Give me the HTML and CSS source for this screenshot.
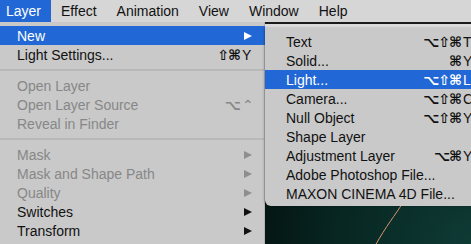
FILE: index.html
```html
<!DOCTYPE html>
<html lang="en">
<head>
  <meta charset="UTF-8">
  <title>Layer Menu</title>
  <link rel="stylesheet" href="styles.css">
</head>
<body>

  <div class="menubar">
    <div class="title open">Layer</div>
    <div class="title">Effect</div>
    <div class="title">Animation</div>
    <div class="title">View</div>
    <div class="title">Window</div>
    <div class="title">Help</div>
  </div>

  <div class="workspace">
    <div class="strip"></div>
    <div class="canvas">
      <svg class="curve" width="471" height="216" viewBox="0 0 471 216">
        <path d="M402 176 C396 186 386 198 375 218" fill="none" stroke="#d9946a" stroke-width="1"/>
      </svg>
    </div>
  </div>

  <!-- Layer menu -->
  <div class="menu main-menu">
    <div class="item active"><span class="label">New</span><span class="arrow"></span></div>
    <div class="item"><span class="label">Light Settings...</span><span class="keys"><span class="mods">⇧⌘</span><span class="key">Y</span></span></div>
    <div class="sep"></div>
    <div class="item disabled"><span class="label">Open Layer</span></div>
    <div class="item disabled"><span class="label">Open Layer Source</span><span class="keys"><span class="mods">⌥</span><span class="key">⌃</span></span></div>
    <div class="item disabled"><span class="label">Reveal in Finder</span></div>
    <div class="sep"></div>
    <div class="item disabled"><span class="label">Mask</span><span class="arrow"></span></div>
    <div class="item disabled"><span class="label">Mask and Shape Path</span><span class="arrow"></span></div>
    <div class="item disabled"><span class="label">Quality</span><span class="arrow"></span></div>
    <div class="item"><span class="label">Switches</span><span class="arrow"></span></div>
    <div class="item"><span class="label">Transform</span><span class="arrow"></span></div>
    <div class="item"><span class="label">Time</span><span class="arrow"></span></div>
  </div>

  <!-- New submenu -->
  <div class="menu sub-menu">
    <div class="item"><span class="label">Text</span><span class="keys"><span class="mods">⌥⇧⌘</span><span class="key">T</span></span></div>
    <div class="item"><span class="label">Solid...</span><span class="keys"><span class="mods">⌘</span><span class="key">Y</span></span></div>
    <div class="item active"><span class="label">Light...</span><span class="keys"><span class="mods">⌥⇧⌘</span><span class="key">L</span></span></div>
    <div class="item"><span class="label">Camera...</span><span class="keys"><span class="mods">⌥⇧⌘</span><span class="key">C</span></span></div>
    <div class="item"><span class="label">Null Object</span><span class="keys"><span class="mods">⌥⇧⌘</span><span class="key">Y</span></span></div>
    <div class="item"><span class="label">Shape Layer</span></div>
    <div class="item"><span class="label">Adjustment Layer</span><span class="keys"><span class="mods">⌥⌘</span><span class="key">Y</span></span></div>
    <div class="item"><span class="label">Adobe Photoshop File...</span></div>
    <div class="item"><span class="label">MAXON CINEMA 4D File...</span></div>
  </div>

</body>
</html>
```

FILE: styles.css
```css
body {
  font-family: 'Liberation Sans', 'DejaVu Sans', sans-serif;
  font-size: 14px;
  color: #111;
  margin: 0;
  width: 471px;
  height: 244px;
  overflow: hidden;
  position: relative;
  background-color: #000;
}

.menubar {
  display: flex;
  height: 22px;
  background-color: #d6d6d6;
}

.title {
  padding: 0 10px;
  line-height: 22px;
}

.title:first-child {
  padding-left: 6px;
}

.title.open {
  background-color: #2168d6;
  color: white;
}

.workspace {
  height: 222px;
  display: flex;
  flex-direction: column;
}

.strip {
  height: 4px;
  border-top: 2px solid #1a1a1a;
  background-color: #dadada;
}

.canvas {
  flex: 1;
  background: radial-gradient(circle at 100% 100%, #0f3b35 0%, #072420 28%, #000 60%);
}

.curve {
  display: block;
}

.menu {
  position: absolute;
  background-color: #c9c9c9;
  box-sizing: border-box;
}

.main-menu {
  top: 22px;
  left: 0;
  width: 265px;
  height: 260px;
  padding: 4px 13px 0 0;
  box-shadow: inset -1px 0 0 #b4b4b4;
}

.sub-menu {
  top: 28px;
  left: 265px;
  width: 230px;
  padding: 4px 20px 3px 0;
  border-radius: 0 0 0 6px;
  box-shadow: -1px 0 2px rgba(0, 0, 0, 0.25);
}

.item {
  display: flex;
  align-items: center;
  height: 19px;
  padding-left: 17px;
}

.sub-menu .item {
  padding-left: 21px;
}

.main-menu .item {
  margin-right: -13px;
  padding-right: 13px;
}

.sub-menu .item {
  margin-right: -20px;
  padding-right: 20px;
}

.item.active {
  background-color: #2168d6;
  color: white;
}

.item.disabled {
  color: #878787;
}

.label {
  flex: 1;
  white-space: nowrap;
}

.keys {
  display: flex;
  align-items: center;
  font-family: 'DejaVu Sans', sans-serif;
  font-size: 14px;
  font-weight: bold;
}

.mods {
  letter-spacing: -1px;
  padding-right: 2px;
}

.key {
  width: 10px;
  font-family: 'Liberation Sans', sans-serif;
  font-weight: normal;
  font-size: 14px;
}

.sub-menu .key {
  width: 12px;
}

.arrow {
  width: 0;
  height: 0;
  border-left: 8px solid #111;
  border-top: 4.5px solid transparent;
  border-bottom: 4.5px solid transparent;
}

.item.active .arrow {
  border-left-color: white;
}

.item.disabled .arrow {
  border-left-color: #8e8e8e;
}

.sep {
  height: 2px;
  margin: 5px 0;
  background-color: #b8b8b8;
  margin-right: -13px;
}
```
